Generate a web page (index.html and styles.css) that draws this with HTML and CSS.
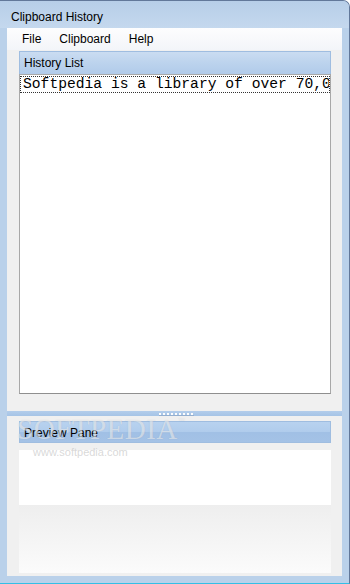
FILE: index.html
```html
<!doctype html>
<html lang="en">
<head>
    <meta charset="utf-8">
    <title>Clipboard History</title>
    <link rel="stylesheet" href="styles.css">
</head>
<body>
    <div class="window">
        <div class="titlebar">Clipboard History</div>
        <div class="client">
            <ul class="menubar">
                <li>File</li>
                <li>Clipboard</li>
                <li>Help</li>
            </ul>
            <div class="history">
                <div class="pane-header light">History List</div>
                <div class="listbox">
                    <div class="list-item">Softpedia is a library of over 70,000 free and free-to-try software programs</div>
                </div>
            </div>
            <div class="splitter"><span class="grip"></span></div>
            <div class="preview">
                <div class="pane-header dark">Preview Pane</div>
                <div class="preview-text"></div>
                <div class="preview-foot"></div>
            </div>
        </div>
        <div class="watermark">SOFTPEDIA<sup>™</sup></div>
        <div class="watermark-url">www.softpedia.com</div>
    </div>
</body>
</html>
```

FILE: styles.css
```css
body {
    margin: 0;
    padding: 0;
    font-family: "Liberation Sans", Arial, sans-serif;
    font-size: 12px;
    color: #000;
}
.window {
    position: relative;
    width: 350px;
    height: 584px;
    box-sizing: border-box;
    background-color: #bad1ea;
    border-top: 1px solid #62789a;
    border-right: 1px solid #62789a;
    border-bottom: 1px solid #33bfe6;
    border-top-right-radius: 7px;
    display: flex;
    flex-direction: column;
    overflow: hidden;
}
.titlebar {
    height: 27px;
    box-sizing: border-box;
    padding: 4px 0 0 11px;
    line-height: 24px;
    background: linear-gradient(#b7cee8, #c4d8ee);
}
.client {
    flex: 1;
    margin: 0 7px 7px 7px;
    background-color: #f0f0f0;
    display: flex;
    flex-direction: column;
}
.menubar {
    list-style: none;
    margin: 0;
    padding: 0 0 0 6px;
    height: 22px;
    display: flex;
    align-items: center;
    background: linear-gradient(#fdfdfe, #f3f5f9);
}
.menubar li {
    padding: 0 9px;
    line-height: 22px;
}
.history {
    padding: 1px 11px 0 12px;
}
.pane-header {
    box-sizing: border-box;
    padding-left: 4px;
    border: 1px solid #9fbde0;
    border-bottom: none;
}
.pane-header.light {
    height: 23px;
    line-height: 22px;
    background: linear-gradient(#cadcf1, #bcd3ed 50%, #b1cbea);
}
.pane-header.dark {
    height: 22px;
    line-height: 22px;
    border-bottom: 1px solid #9fbde0;
    background: linear-gradient(#b8d2ef, #b0ccec 50%, #a1c0e5 52%, #a4c2e6);
}
.listbox {
    height: 320px;
    box-sizing: border-box;
    background-color: #fff;
    border: 1px solid #a8a8a8;
    border-bottom-color: #8f8f8f;
    padding: 1px 0 0 0;
    overflow: hidden;
}
.list-item {
    height: 17px;
    box-sizing: border-box;
    border: 1px dotted #333;
    font-family: "Liberation Mono", "Courier New", monospace;
    font-size: 14.67px;
    line-height: 15px;
    white-space: nowrap;
    overflow: hidden;
    padding-left: 2px;
}
.splitter {
    margin-top: 17px;
    height: 5px;
    background: linear-gradient(#b3cdeb, #a6c4e6);
    display: flex;
    justify-content: center;
    align-items: center;
}
.grip {
    width: 35px;
    height: 2px;
    margin-left: 3px;
    background: repeating-linear-gradient(90deg, #fdfdfd 0 2px, transparent 2px 4px);
    box-shadow: 0 1px 0 rgba(90, 110, 140, 0.25);
}
.preview {
    padding: 5px 11px 0 12px;
}
.preview-text {
    margin-top: 7px;
    height: 55px;
    background-color: #fff;
}
.preview-foot {
    height: 68px;
    background: linear-gradient(#eeeeee, #fbfbfb);
}
.watermark {
    position: absolute;
    left: 17px;
    top: 412px;
    font-family: "Liberation Serif", "Times New Roman", serif;
    font-size: 29px;
    letter-spacing: 0.5px;
    color: rgba(255, 255, 255, 0.5);
    text-shadow: 0 0 1px rgba(120, 130, 140, 0.3);
    pointer-events: none;
}
.watermark sup {
    font-family: "Liberation Sans", Arial, sans-serif;
    font-size: 7px;
    vertical-align: 16px;
}
.watermark-url {
    position: absolute;
    left: 33px;
    top: 445px;
    font-size: 11px;
    color: rgba(200, 200, 200, 0.7);
    pointer-events: none;
}
```
